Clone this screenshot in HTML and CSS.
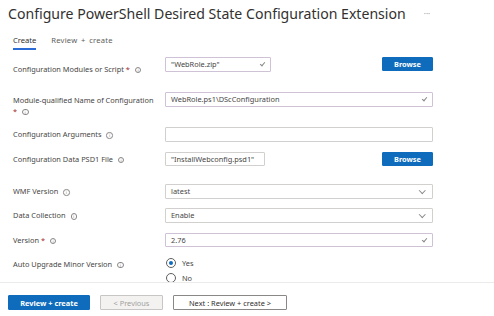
FILE: index.html
```html
<!DOCTYPE html>
<html>
<head>
<meta charset="utf-8">
<link rel="stylesheet" href="styles.css">
</head>
<body>
<div class="page">
  <header class="head">
    <h1 class="title">Configure PowerShell Desired State Configuration Extension</h1>
    <span class="more">···</span>
  </header>
  <nav class="tabs">
    <span class="tab active">Create</span>
    <span class="tab wide">Review + create</span>
  </nav>
  <main class="form">
    <div class="row r1">
      <div class="label">Configuration Modules or Script <span class="req">*</span> <span class="info">i</span></div>
      <div class="ctrl split">
        <div class="field short lav">"WebRole.zip"<span class="check"></span></div>
        <button class="btn primary browse">Browse</button>
      </div>
    </div>
    <div class="row r2">
      <div class="label">Module-qualified Name of Configuration<br><span class="req">*</span> <span class="info">i</span></div>
      <div class="ctrl"><div class="field lav">WebRole.ps1\DScConfiguration<span class="check"></span></div></div>
    </div>
    <div class="row r3">
      <div class="label">Configuration Arguments <span class="info">i</span></div>
      <div class="ctrl"><div class="field"></div></div>
    </div>
    <div class="row r4">
      <div class="label">Configuration Data PSD1 File <span class="info">i</span></div>
      <div class="ctrl split">
        <div class="field short2">"InstallWebconfig.psd1"</div>
        <button class="btn primary browse">Browse</button>
      </div>
    </div>
    <div class="row r5">
      <div class="label">WMF Version <span class="info">i</span></div>
      <div class="ctrl"><div class="field">latest<span class="chev"></span></div></div>
    </div>
    <div class="row r6">
      <div class="label">Data Collection <span class="info">i</span></div>
      <div class="ctrl"><div class="field">Enable<span class="chev"></span></div></div>
    </div>
    <div class="row r7">
      <div class="label">Version <span class="req">*</span> <span class="info">i</span></div>
      <div class="ctrl"><div class="field lav f14">2.76<span class="check"></span></div></div>
    </div>
    <div class="row r8">
      <div class="label">Auto Upgrade Minor Version <span class="info">i</span></div>
      <div class="ctrl radios">
        <label class="radio"><span class="dot on"></span>Yes</label>
        <label class="radio"><span class="dot"></span>No</label>
      </div>
    </div>
  </main>
  <footer class="foot">
    <button class="btn primary fb1">Review + create</button>
    <button class="btn disabled fb2">&lt; Previous</button>
    <button class="btn outline fb3">Next : Review + create &gt;</button>
  </footer>
</div>
</body>
</html>
```
FILE: styles.css
```css
* { box-sizing: border-box; }
html, body { margin: 0; padding: 0; background: #fff; }
body {
  font-family: "Noto Sans", "Open Sans", sans-serif;
  color: #323130;
  width: 494px;
  height: 316px;
  overflow: hidden;
}
.page { display: flex; flex-direction: column; height: 316px; }
.head { display: flex; align-items: center; padding: 1px 0 0 8px; height: 26px; flex: none; }
.title { margin: 0; font-size: 14.1px; font-weight: 400; color: #323130; white-space: nowrap; }
.more { margin-left: 18px; font-size: 8px; color: #a19f9d; }
.tabs { display: flex; gap: 15px; padding: 8px 0 0 13px; height: 30px; flex: none; }
.tab { font-size: 7.6px; color: #605e5c; height: 16px; line-height: 12px; }
.tab.wide { word-spacing: 1.5px; letter-spacing: 0.2px; }
.tab.active { color: #323130; border-bottom: 2px solid #2b6bd6; }
.form { display: flex; flex-direction: column; padding-left: 13px; flex: 1; overflow: hidden; min-height: 0; }
.row { display: grid; grid-template-columns: 152px 268px; align-items: start; flex: none; }
.label { font-size: 7.4px; color: #484644; line-height: 11px; }
.req { color: #a4262c; }
.info {
  display: inline-block; width: 6.5px; height: 6.5px; border: 0.8px solid #8a8886; border-radius: 50%;
  font-size: 4.5px; line-height: 5px; text-align: center; color: #8a8886; vertical-align: 0; margin-left: 3px;
  font-family: "DejaVu Sans", sans-serif;
}
.ctrl { height: 15px; }
.split { display: flex; justify-content: space-between; }
.field {
  position: relative; height: 15px; border: 1px solid #d2d0ce; border-radius: 1px;
  font-size: 7.4px; line-height: 13px; padding-left: 5px; color: #484644; background: #fff;
}
.field.f14 { height: 14px; line-height: 12px; }
.field.lav { border-color: #cfc2d6; }
.field.short { width: 106px; }
.field.short2 { width: 100px; height: 14px; line-height: 12px; }
.check {
  position: absolute; right: 6px; top: 3px; width: 3px; height: 5px;
  border-right: 0.8px solid #8a8886; border-bottom: 0.8px solid #8a8886; transform: rotate(40deg);
}
.chev {
  position: absolute; right: 8px; top: 3px; width: 4.5px; height: 4.5px;
  border-right: 0.8px solid #8a8886; border-bottom: 0.8px solid #8a8886; transform: rotate(45deg);
}
.btn {
  font-family: "Noto Sans", "Open Sans", sans-serif; font-size: 7.4px; height: 15px; padding: 0;
  border-radius: 1px; cursor: default;
}
.primary { background: #0f6cbd; border: 1px solid #0f6cbd; color: #fff; font-weight: 700; }
.browse { width: 51px; height: 14px; }
.r1 { margin-top: 1px; }
.r1 .label { padding-top: 6.5px; }
.r2 { margin-top: 17.5px; }
.r2 .label { padding-top: 2.5px; }
.r3 { margin-top: 10.5px; }
.r3 .label { padding-top: 2px; }
.r4 { margin-top: 10px; }
.r4 .label { padding-top: 1.5px; }
.r5 { margin-top: 17px; }
.r5 .label { padding-top: 2px; }
.r6 { margin-top: 9px; }
.r6 .label { padding-top: 2px; }
.r7 { margin-top: 10px; }
.r7 .label { padding-top: 1.5px; }
.r8 { margin-top: 9px; }
.r8 .label { padding-top: 1.5px; }
.radios { display: flex; flex-direction: column; gap: 4.5px; height: auto; padding-left: 1px; }
.radio { display: flex; align-items: center; gap: 6px; font-size: 7.4px; color: #484644; height: 11px; }
.dot {
  width: 10px; height: 10px; border: 0.8px solid #605e5c; border-radius: 50%; position: relative;
}
.dot.on::after {
  content: ""; position: absolute; left: 2.2px; top: 2.2px; width: 4px; height: 4px; border-radius: 50%; background: #0f6cbd;
}
.foot {
  flex: none; border-top: 1px solid #edebe9; height: 34px;
  display: flex; gap: 10px; padding: 12px 0 0 8px;
}
.fb1 { width: 82px; }
.disabled { width: 63px; background: #f3f2f1; border: 1px solid #c8c6c4; color: #a19f9d; }
.outline { width: 114px; background: #fff; border: 1px solid #8a8886; color: #323130; }
```
